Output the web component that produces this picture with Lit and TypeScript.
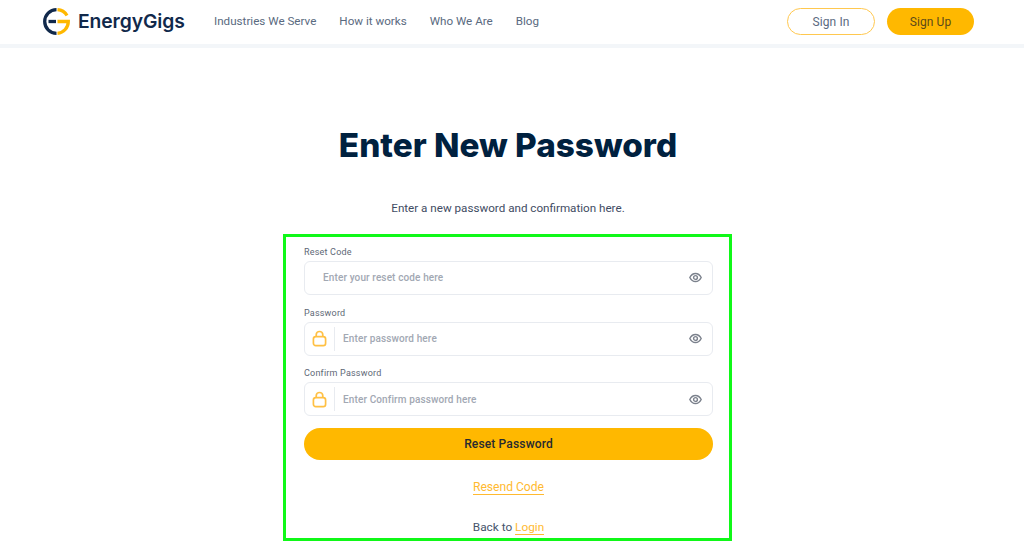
import { LitElement, html, css } from "lit";
import { customElement } from "lit/decorators.js";

const eye = html`<svg class="eye" viewBox="0 0 24 24" width="13" height="13" fill="none" stroke="#7b818c" stroke-width="2.600"><path d="M1.500 12C4 7 7.500 4.500 12 4.500S20 7 22.500 12C20 17 16.500 19.500 12 19.500S4 17 1.500 12z"/><circle cx="12" cy="12" r="3.500"/></svg>`;
const lock = html`<svg viewBox="0 0 16 18" width="15" height="17" fill="none" stroke="#ffc043" stroke-width="1.800"><rect x="1.500" y="7" width="13" height="9.500" rx="2.500"/><path d="M4.500 7V5a3.500 3.500 0 0 1 7 0v2"/></svg>`;

@customElement("app-root")
export class AppRoot extends LitElement {
  static styles = css`
    :host { display: block; width: 1024px; height: 544px; overflow: hidden; background: #fff; font-family: Roboto, "Liberation Sans", sans-serif; color: #46546b; }
    * { box-sizing: border-box; }
    header { height: 48px; border-bottom: 4px solid #f3f6f9; display: flex; align-items: center; padding: 0 50px 2px 43px; }
    .logo { display: flex; align-items: center; gap: 8px; width: 171px; font-family: Inter, sans-serif; font-weight: 600; font-size: 19.300px; letter-spacing: -0.100px; color: #11294b; }
    .logo svg { margin-top: 1px; }
    nav { display: flex; gap: 23px; font-size: 11.650px; color: #5a6a80; flex: 1; }
    .auth { display: flex; gap: 12px; }
    .btn { height: 27px; border-radius: 14px; display: flex; align-items: center; justify-content: center; padding-top: 1px; font-size: 12px; letter-spacing: 0.100px; }
    .in { width: 88px; border: 1px solid #ffc84f; color: #5a6a80; }
    .up { width: 87px; background: #ffb800; color: #5b4a1a; }
    main { display: flex; flex-direction: column; align-items: center; width: 1015px; }
    h1 { margin: 76px 0 0 1px; height: 42px; line-height: 42px; font-family: Inter, sans-serif; font-weight: 800; font-size: 33.300px; color: #00213f; }
    .sub { margin: 34px 0 1px 1px; height: 16px; line-height: 16px; font-size: 11.650px; color: #3f4c63; }
    .box { margin-top: 17px; width: 449px; height: 307px; border: 3px solid #10f818; padding: 9px 16px 0 18px; display: flex; flex-direction: column; }
    label { display: block; height: 15px; line-height: 12px; font-size: 9px; letter-spacing: 0.200px; color: #5e6876; }
    .field { height: 34px; border: 1px solid #e8ebf0; border-radius: 6px; display: flex; align-items: center; margin-bottom: 11px; padding-bottom: 1px; font-size: 10px; font-weight: 500; letter-spacing: 0.120px; color: #a2a8b3; padding-right: 10px; }
    .field.first { margin-bottom: 12px; }
    .field.last { padding-bottom: 0; }
    .ph { flex: 1; padding-left: 18px; }
    .ic { width: 30px; height: 24px; border-right: 1px solid #e8ebf0; display: flex; align-items: center; justify-content: center; }
    .ic + .ph { padding-left: 8px; }
    .submit { height: 32px; margin-top: 1px; border-radius: 16px; background: #ffb800; color: #272a30; font-size: 12px; font-weight: 500; letter-spacing: 0.150px; display: flex; align-items: center; justify-content: center; }
    .links { display: flex; flex-direction: column; align-items: center; font-size: 11.800px; }
    .links a { color: #ffba30; text-decoration: none; border-bottom: 1px solid #ffba30; line-height: 13px; }
    .links .resend { margin-top: 21px; height: 14px; font-size: 12.100px; }
    .back { margin-top: 26px; height: 14px; line-height: 13px; color: #46546b; }
  `;

  render() {
    return html`
      <header>
        <div class="logo">
          <svg width="27" height="27" viewBox="0 0 27 27" fill="none" stroke-width="3.300">
            <path d="M13.500 1.700A11.800 11.800 0 0 0 13.500 25.300" stroke="#11294b"/>
            <path d="M5.500 13.500H13" stroke="#11294b"/>
            <path d="M14.500 1.700A11.800 11.800 0 0 1 24 7.500" stroke="#ffb800"/>
            <path d="M14.500 13.500H25.300A11.800 11.800 0 0 1 14.500 25.300" stroke="#ffb800"/>
          </svg>
          <span>EnergyGigs</span>
        </div>
        <nav><span>Industries We Serve</span><span>How it works</span><span>Who We Are</span><span>Blog</span></nav>
        <div class="auth"><div class="btn in">Sign In</div><div class="btn up">Sign Up</div></div>
      </header>
      <main>
        <h1>Enter New Password</h1>
        <p class="sub">Enter a new password and confirmation here.</p>
        <div class="box">
          <label>Reset Code</label>
          <div class="field first"><span class="ph">Enter your reset code here</span>${eye}</div>
          <label>Password</label>
          <div class="field"><span class="ic">${lock}</span><span class="ph">Enter password here</span>${eye}</div>
          <label>Confirm Password</label>
          <div class="field last"><span class="ic">${lock}</span><span class="ph">Enter Confirm password here</span>${eye}</div>
          <div class="submit">Reset Password</div>
          <div class="links">
            <a class="resend">Resend Code</a>
            <div class="back">Back to <a>Login</a></div>
          </div>
        </div>
      </main>
    `;
  }
}
